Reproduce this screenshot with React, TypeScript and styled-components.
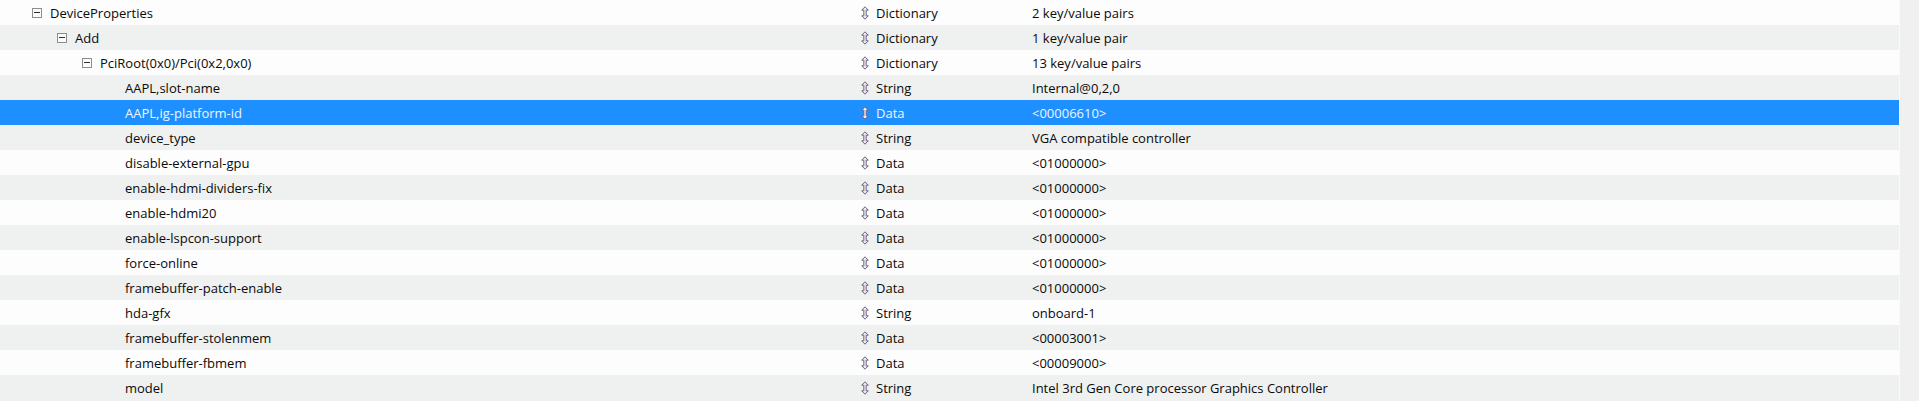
import { createGlobalStyle } from "styled-components";
import styled from "styled-components";

type Row = {
  key: string;
  depth: number;
  expandable?: boolean;
  type: string;
  value: string;
  selected?: boolean;
};

const rows: Row[] = [
  { key: "DeviceProperties", depth: 0, expandable: true, type: "Dictionary", value: "2 key/value pairs" },
  { key: "Add", depth: 1, expandable: true, type: "Dictionary", value: "1 key/value pair" },
  { key: "PciRoot(0x0)/Pci(0x2,0x0)", depth: 2, expandable: true, type: "Dictionary", value: "13 key/value pairs" },
  { key: "AAPL,slot-name", depth: 3, type: "String", value: "Internal@0,2,0" },
  { key: "AAPL,ig-platform-id", depth: 3, type: "Data", value: "<00006610>", selected: true },
  { key: "device_type", depth: 3, type: "String", value: "VGA compatible controller" },
  { key: "disable-external-gpu", depth: 3, type: "Data", value: "<01000000>" },
  { key: "enable-hdmi-dividers-fix", depth: 3, type: "Data", value: "<01000000>" },
  { key: "enable-hdmi20", depth: 3, type: "Data", value: "<01000000>" },
  { key: "enable-lspcon-support", depth: 3, type: "Data", value: "<01000000>" },
  { key: "force-online", depth: 3, type: "Data", value: "<01000000>" },
  { key: "framebuffer-patch-enable", depth: 3, type: "Data", value: "<01000000>" },
  { key: "hda-gfx", depth: 3, type: "String", value: "onboard-1" },
  { key: "framebuffer-stolenmem", depth: 3, type: "Data", value: "<00003001>" },
  { key: "framebuffer-fbmem", depth: 3, type: "Data", value: "<00009000>" },
  { key: "model", depth: 3, type: "String", value: "Intel 3rd Gen Core processor Graphics Controller" },
];

const GlobalStyle = createGlobalStyle`
  html, body {
    margin: 0;
    padding: 0;
    background: #f0f0f0;
  }
  body {
    font-family: "Open Sans", "Noto Sans", "Liberation Sans", sans-serif;
    font-size: 13px;
    color: #000;
  }
`;

const Page = styled.div`
  display: flex;
  width: 1919px;
  height: 401px;
  overflow: hidden;
`;

const Table = styled.div`
  width: 1899px;
  display: flex;
  flex-direction: column;
  border-right: 1px solid #fafafa;
`;

const Side = styled.div`
  flex: 1;
  background: #f0f0f0;
`;

const RowBox = styled.div<{ $stripe: boolean; $selected?: boolean }>`
  display: grid;
  grid-template-columns: 855px 177px 1fr;
  align-items: center;
  height: 25px;
  background: ${({ $stripe, $selected }) =>
    $selected ? "#1e8fff" : $stripe ? "#eff0f0" : "#fdfdfd"};
  color: ${({ $selected }) => ($selected ? "#eef5ff" : "#0a0a0a")};
  white-space: nowrap;
`;

const KeyCell = styled.div<{ $depth: number }>`
  display: flex;
  align-items: center;
  padding-left: ${({ $depth }) => 32 + $depth * 25}px;
`;

const Toggle = styled.span`
  display: inline-flex;
  align-items: center;
  justify-content: center;
  box-sizing: border-box;
  width: 10px;
  height: 10px;
  border: 1px solid #8e8e8e;
  background: #fbfbfb;
  margin-right: 8px;
  &::after {
    content: "";
    width: 6px;
    height: 1px;
    background: #303030;
  }
`;

const Spacer = styled.span`
  width: 18px;
  flex: none;
`;

const TypeCell = styled.div`
  display: flex;
  align-items: center;
  padding-left: 6px;
`;

const ArrowIcon = styled.svg`
  flex: none;
  margin-right: 7px;
`;

const ValueCell = styled.div``;

const UpDown = () => (
  <ArrowIcon width="8" height="14" viewBox="0 0 8 14">
    <path
      d="M4 0.8 L7.3 4.2 L5.2 4.2 L5.2 9.8 L7.3 9.8 L4 13.2 L0.7 9.8 L2.8 9.8 L2.8 4.2 L0.7 4.2 Z"
      fill="#ece8f2"
      stroke="#6f6480"
      strokeWidth="1"
      strokeLinejoin="round"
    />
  </ArrowIcon>
);

export default function App() {
  return (
    <>
      <GlobalStyle />
      <Page>
        <Table>
          {rows.map((r, i) => (
            <RowBox key={r.key} $stripe={i % 2 === 1} $selected={r.selected}>
              <KeyCell $depth={r.depth}>
                {r.expandable ? <Toggle /> : <Spacer />}
                {r.key}
              </KeyCell>
              <TypeCell>
                <UpDown />
                {r.type}
              </TypeCell>
              <ValueCell>{r.value}</ValueCell>
            </RowBox>
          ))}
        </Table>
        <Side />
      </Page>
    </>
  );
}
